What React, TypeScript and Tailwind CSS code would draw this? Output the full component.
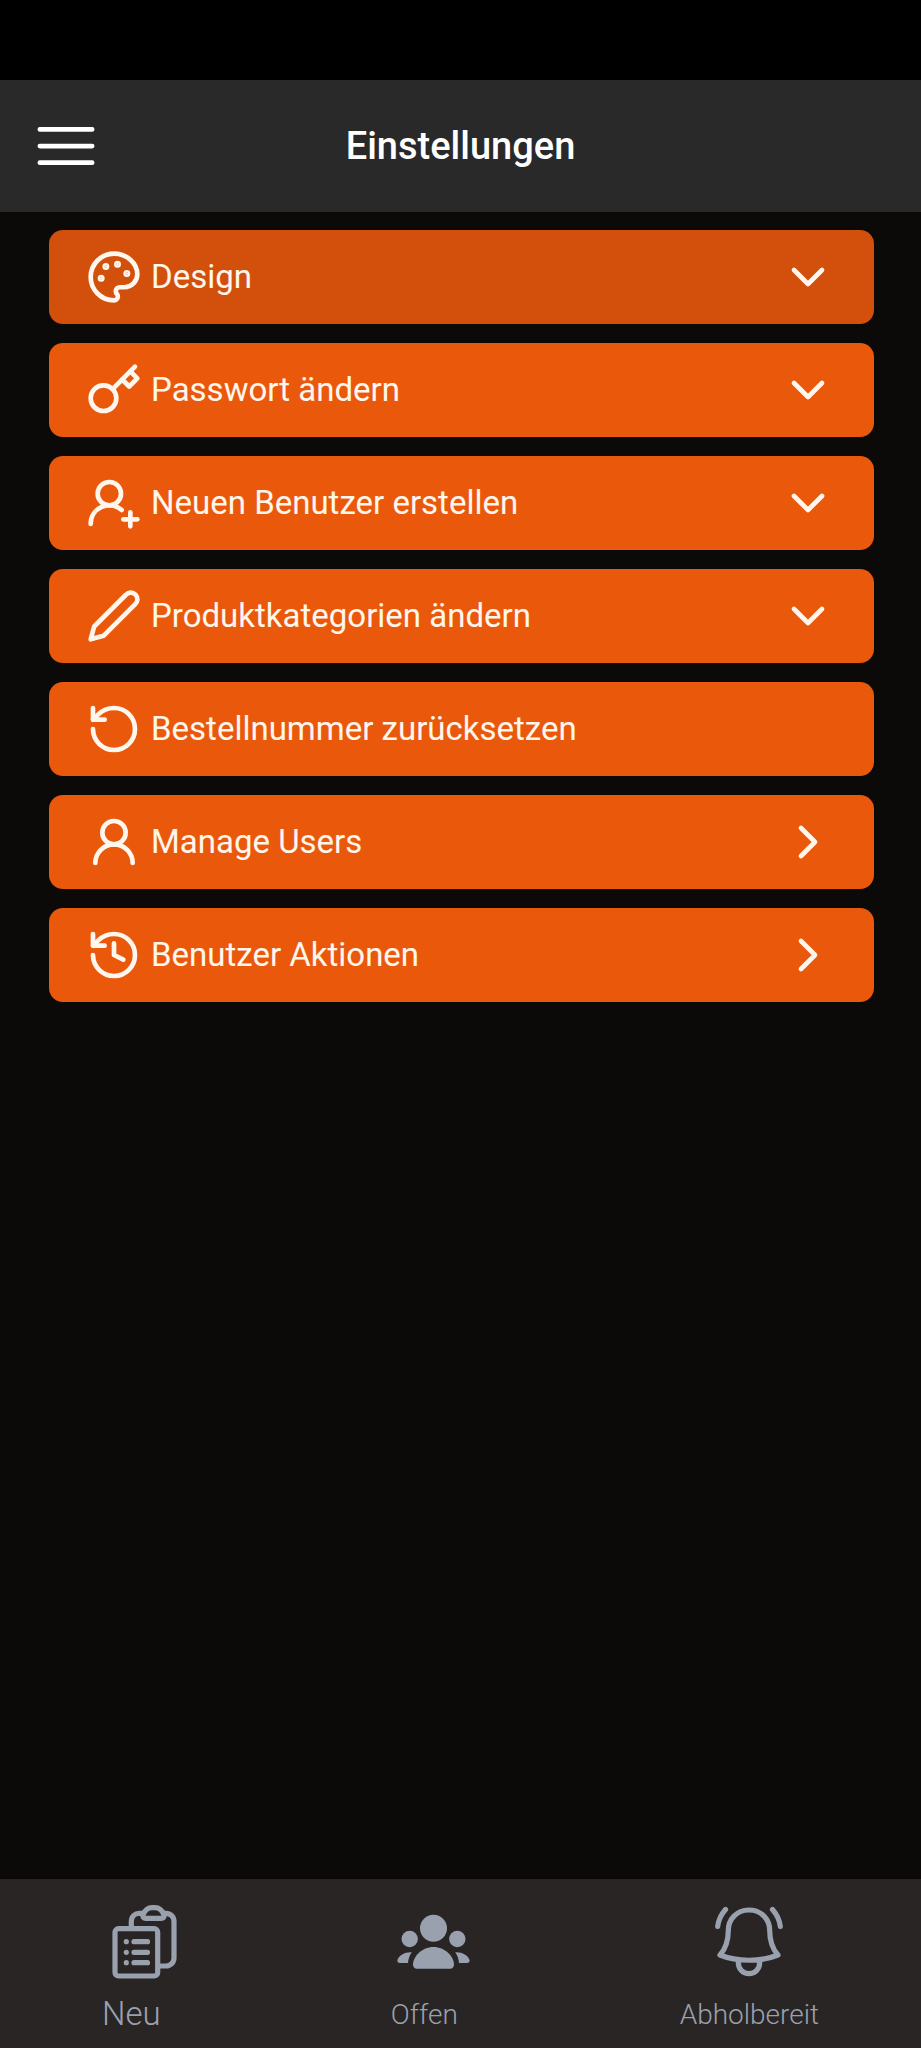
import React from "react";
import { ChevronDown, ChevronRight, History, RotateCcw, UserRound, UserRoundPlus } from "lucide-react";

type IconProps = { className?: string };

const outline = {
  viewBox: "0 0 24 24",
  fill: "none",
  stroke: "currentColor",
  strokeWidth: 2,
  strokeLinecap: "round" as const,
  strokeLinejoin: "round" as const,
  "aria-hidden": true,
};

function PaletteIcon({ className }: IconProps) {
  return (
    <svg {...outline} className={className}>
      <circle cx="13.5" cy="6.5" r=".5" fill="currentColor" />
      <circle cx="17.5" cy="10.5" r=".5" fill="currentColor" />
      <circle cx="8.5" cy="7.5" r=".5" fill="currentColor" />
      <circle cx="6.5" cy="12.5" r=".5" fill="currentColor" />
      <path d="M12 2C6.5 2 2 6.5 2 12s4.5 10 10 10c.926 0 1.648-.746 1.648-1.688 0-.437-.18-.835-.437-1.125-.29-.289-.438-.652-.438-1.125a1.64 1.64 0 0 1 1.668-1.668h1.996c3.051 0 5.555-2.503 5.555-5.554C21.965 6.012 17.461 2 12 2z" />
    </svg>
  );
}

function KeyIcon({ className }: IconProps) {
  return (
    <svg {...outline} className={className}>
      <circle cx="7.5" cy="15.5" r="5.5" />
      <path d="m21 2-9.6 9.6" />
      <path d="m15.5 7.5 3 3L22 7l-3-3" />
    </svg>
  );
}

function PencilIcon({ className }: IconProps) {
  return (
    <svg {...outline} className={className}>
      <path d="M17 3a2.85 2.83 0 1 1 4 4L7.5 20.5 2 22l1.5-5.5Z" />
    </svg>
  );
}

function MenuIcon({ className }: IconProps) {
  return (
    <svg {...outline} strokeWidth={1.5} className={className}>
      <path d="M3.75 6.75h16.5M3.75 12h16.5M3.75 17.25h16.5" />
    </svg>
  );
}

const navOutline = { ...outline, viewBox: "0 0 80 80", strokeWidth: 5.2 };

function OrdersIcon({ className }: IconProps) {
  return (
    <svg {...navOutline} className={className}>
      <rect x="13" y="28.7" width="42.7" height="47.3" rx="3.5" />
      <path d="M32 41.7h13.5M32 52.3h13.5M32 62.7h13.5" />
      <path d="M24.3 41.7h.01M24.3 52.3h.01M24.3 62.7h.01" />
      <path d="M29.3 27v-5.5c0-5 3.5-8.2 8-8.2h3M62.5 13.3H64c4.5 0 8 3.5 8 8V58c0 4.5-3.5 8-8 8h-7" />
      <path d="M43.5 18.3h16c2.3 0 3.2-1.8 2.4-3.6C60 10.2 56.8 7.7 53 7.7h-3c-3.8 0-7 2.5-8.9 7-.8 1.8.1 3.600 2.400 3.600z" />
    </svg>
  );
}

function PeopleIcon({ className }: IconProps) {
  return (
    <svg viewBox="0 0 80 80" fill="currentColor" aria-hidden className={className}>
      <circle cx="42.5" cy="28.3" r="13.5" />
      <circle cx="18.7" cy="39" r="8.2" />
      <circle cx="66.3" cy="39" r="8.2" />
      <path d="M42.5 47C54 47 63 56.5 63 64.5c0 2.6-1.5 4.2-4 4.2H26c-2.5 0-4-1.6-4-4.2C22 56.5 31 47 42.5 47z" />
      <path d="M20.8 52.2C18.5 55.5 17.2 59 17 63H9c-2 0-3.1-1.5-2.5-3.2C8.3 55 14 51.7 20.8 52.2z" />
      <path d="M64.2 52.2C66.5 55.5 67.8 59 68 63h8c2 0 3.1-1.5 2.5-3.2C76.7 55 71 51.7 64.2 52.2z" />
    </svg>
  );
}

function BellIcon({ className }: IconProps) {
  return (
    <svg {...navOutline} className={className}>
      <path d="M40 10C27.5 10 19.3 19.5 19.3 30.5 19.3 42 16.5 49 11 55 28 62 52 62 69 55 63.5 49 60.7 42 60.7 30.5 60.7 19.5 52.5 10 40 10z" />
      <path d="M29.3 61.5c-.5 16.2 21.9 16.2 21.4 0" />
      <path d="M16.5 9.5C12.5 14 9.5 19.5 8.7 26.5M63.5 9.5c4 4.5 7 10 7.8 17" />
    </svg>
  );
}

type Entry = {
  label: string;
  icon: React.ComponentType<IconProps>;
  trailing?: React.ComponentType<IconProps>;
  active?: boolean;
};

const entries: Entry[] = [
  { label: "Design", icon: PaletteIcon, trailing: ChevronDown, active: true },
  { label: "Passwort ändern", icon: KeyIcon, trailing: ChevronDown },
  { label: "Neuen Benutzer erstellen", icon: UserRoundPlus, trailing: ChevronDown },
  { label: "Produktkategorien ändern", icon: PencilIcon, trailing: ChevronDown },
  { label: "Bestellnummer zurücksetzen", icon: RotateCcw },
  { label: "Manage Users", icon: UserRound, trailing: ChevronRight },
  { label: "Benutzer Aktionen", icon: History, trailing: ChevronRight },
];

function SettingsButton({ label, icon: Icon, trailing: Trailing, active }: Entry) {
  return (
    <button
      type="button"
      className={`flex h-[94px] w-full items-center gap-[9px] rounded-[14px] pr-[38px] pl-[37px] text-left text-[33px] leading-10 text-orange-50 ${
        active ? "bg-[#d3500c]" : "bg-[#ea580c]"
      }`}
    >
      <Icon className="size-14 shrink-0" />
      <span className="grow">{label}</span>
      {Trailing && <Trailing className="size-14 shrink-0" />}
    </button>
  );
}

export default function App() {
  return (
    <div className="flex min-h-screen flex-col bg-[#0c0a09] font-[Roboto,sans-serif]">
      <div className="h-20 bg-black" />
      <header className="grid h-[132px] grid-cols-[1fr_auto_1fr] items-center bg-[#292929] px-7">
        <button type="button" aria-label="Menü" className="justify-self-start text-white">
          <MenuIcon className="size-[76px]" />
        </button>
        <h1 className="text-[38px] leading-12 font-medium text-white">Einstellungen</h1>
      </header>

      <main className="flex grow flex-col gap-[19px] pt-[18px] pr-[47px] pl-[49px]">
        {entries.map((entry) => (
          <SettingsButton key={entry.label} {...entry} />
        ))}
      </main>

      <nav className="flex h-[169px] items-start justify-between bg-[#292524] px-[102px] pt-[21px] font-light text-gray-400">
        <a href="#neu" className="flex flex-col items-start gap-[14px] text-[33px] leading-10">
          <OrdersIcon className="size-20" />
          Neu
        </a>
        <a href="#offen" className="flex flex-col items-start gap-[14px] text-[28px] leading-[42px]">
          <PeopleIcon className="size-20" />
          Offen
        </a>
        <a href="#abholbereit" className="flex flex-col items-center gap-[14px] text-[28px] leading-[42px]">
          <BellIcon className="size-20" />
          Abholbereit
        </a>
      </nav>
    </div>
  );
}
